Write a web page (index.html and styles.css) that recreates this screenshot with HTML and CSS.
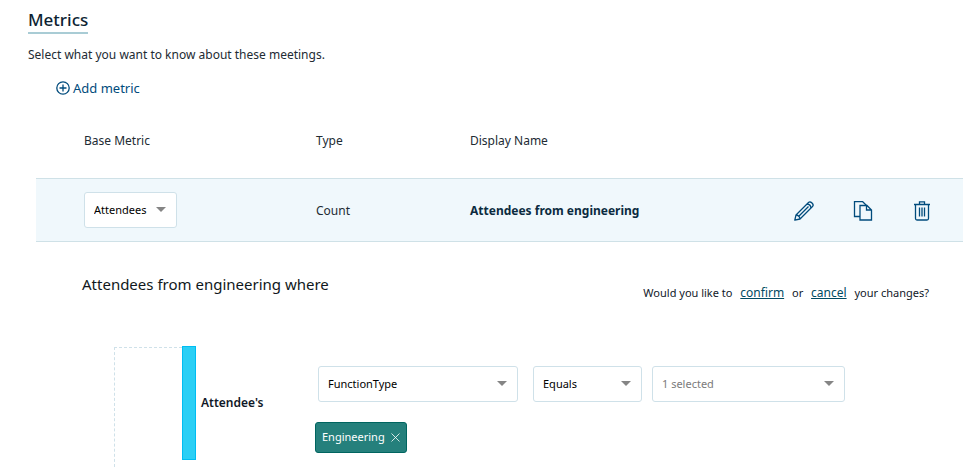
FILE: index.html
```html
<!DOCTYPE html>
<html lang="en">
<head>
  <meta charset="UTF-8" />
  <meta name="viewport" content="width=device-width, initial-scale=1.0"/>
  <title>Metrics</title>
  <link rel="stylesheet" href="styles.css">
</head>
<body>
  <main class="metrics">
    <h1>Metrics</h1>
    <p class="intro">Select what you want to know about these meetings.</p>
    <button type="button" class="add-metric">
      <svg width="14" height="14" viewBox="0 0 14 14" fill="none" stroke="currentColor" stroke-width="1.3" aria-hidden="true">
        <circle cx="7" cy="7" r="6.2"/><path d="M7 3.5v7M3.5 7h7"/>
      </svg>
      Add metric
    </button>

    <table class="metric-table">
      <thead>
        <tr>
          <th class="col-base">Base Metric</th>
          <th class="col-type">Type</th>
          <th class="col-name">Display Name</th>
          <th class="col-actions"></th>
        </tr>
      </thead>
      <tbody>
        <tr>
          <td class="col-base">
            <select class="dropdown base" aria-label="Base Metric"><option>Attendees</option></select>
          </td>
          <td class="text">Count</td>
          <td class="text name">Attendees from engineering</td>
          <td class="text">
            <div class="actions">
              <button type="button" aria-label="Edit">
                <svg width="20" height="20" viewBox="0 0 20 20" fill="none" stroke="currentColor" stroke-width="1.3" stroke-linejoin="round" aria-hidden="true">
                  <path d="M.8 19.2L2 14 14.5 1.5c2-2 6 2 4 4L6 18z"/>
                  <path d="M2 14c2 0 4 2 4 4M13 3c2 .2 3.8 2 4 4M4.800 15.200L14.500 5.500"/>
                </svg>
              </button>
              <button type="button" aria-label="Copy">
                <svg width="20" height="20" viewBox="0 0 20 20" fill="none" stroke="currentColor" stroke-width="1.3" aria-hidden="true">
                  <path d="M7 15.500H1.500v-15h8l4 4"/>
                  <path d="M7 4.500h7l4.500 4.500v10H7zM13.500 4.500v4.500h5"/>
                </svg>
              </button>
              <button type="button" aria-label="Delete">
                <svg width="20" height="20" viewBox="0 0 20 20" fill="none" stroke="currentColor" stroke-width="1.3" aria-hidden="true">
                  <path d="M2 3.500h16M7.500 3V.800h5V3M3.500 3.500v14q0 1.500 1.500 1.500h10q1.500 0 1.500-1.500v-14M7.500 6.500v9M10 6.500v9M12.500 6.500v9"/>
                </svg>
              </button>
            </div>
          </td>
        </tr>
      </tbody>
    </table>

    <section class="filter">
      <div class="filter-head">
        <h2>Attendees from engineering where</h2>
        <p>Would you like to <a href="#confirm">confirm</a> or <a href="#cancel">cancel</a> your changes?</p>
      </div>
      <div class="filter-body">
        <div class="branch"></div>
        <div class="bar"></div>
        <span class="subject">Attendee's</span>
        <div class="conditions">
          <div class="condition-row">
            <select class="dropdown attribute" aria-label="Attribute"><option>FunctionType</option></select>
            <select class="dropdown operator" aria-label="Operator"><option>Equals</option></select>
            <select class="dropdown values" aria-label="Values"><option>1 selected</option></select>
          </div>
          <button type="button" class="tag" aria-label="Remove Engineering">
            Engineering
            <svg width="9" height="9" viewBox="0 0 9 9" stroke="currentColor" stroke-opacity=".8" aria-hidden="true"><path d="M.5.5l8 8M8.5.5l-8 8"/></svg>
          </button>
        </div>
      </div>
    </section>
  </main>
</body>
</html>
```

FILE: styles.css
```css
* { box-sizing: border-box; }
body { margin: 0; background: #fff; color: #222b33; font-family: "Noto Sans", "Segoe UI", sans-serif; font-size: 12px; line-height: 18px; }
h1, h2, p { margin: 0; font-weight: normal; }
button, select { font: inherit; }
button { border: none; background: none; padding: 0; color: inherit; cursor: pointer; }

.metrics { padding: 8px 15px 0 28px; }
h1 { width: fit-content; color: #0d1f33; font-size: 17px; font-weight: 500; line-height: 24px; border-bottom: 2px solid #a9ccd5; }
.intro { margin-top: 12px; }
.add-metric { display: flex; align-items: center; gap: 3px; margin: 15px 0 0 28px; color: #004b7c; font-size: 13px; }

/* metric list */
.metric-table { width: calc(100% - 8px); margin: 24px 0 0 8px; border-collapse: collapse; table-layout: fixed; }
.metric-table th, .metric-table td { padding: 0; text-align: left; font-weight: normal; }
.metric-table th { height: 57px; padding-top: 11px; vertical-align: top; }
.metric-table .col-base { width: 280px; padding-left: 48px; }
.metric-table .col-type { width: 154px; }
.metric-table .col-actions { width: 169px; }
.metric-table td { height: 63px; background: #f0f8fc; border: solid #cfe1e7; border-width: 1px 0; }
.metric-table .text { padding-top: 3px; }
.metric-table .name { color: #0b2b40; font-weight: bold; }
.actions { display: flex; gap: 39px; color: #004b7c; }
.actions svg { display: block; }

.dropdown {
  appearance: none; height: 36px; padding: 1px 9px 0; border: 1px solid #cfe1e9; border-radius: 3px; color: #000; font-size: 11px;
  background: #fff url("data:image/svg+xml,%3Csvg xmlns='http://www.w3.org/2000/svg' width='10' height='5'%3E%3Cpath d='M0 0h10L5 5z' fill='%23858585'/%3E%3C/svg%3E") no-repeat right 10px center;
}
.base { display: block; width: 93px; }
.attribute { width: 200px; }
.operator { width: 109px; }
.values { width: 193px; color: #7b7b7b; }

/* filter editor */
.filter-head { display: flex; justify-content: space-between; padding: 30px 34px 0 54px; }
.filter-head h2 { color: #101820; font-size: 15px; line-height: 24px; }
.filter-head p { margin-top: 12px; color: #101828; font-size: 11px; }
.filter-head a { margin: 0 5px; color: #004b63; font-size: 12px; }
.filter-body { display: flex; margin: 44px 0 0 86px; height: 121px; }
.branch { width: 68px; margin-top: 1px; border: dashed #cfe1e9; border-width: 1px 0 0 1px; }
.bar { width: 14px; height: 114px; background: #2bcff5; border: 1px solid #00bdf2; }
.subject { width: 119px; height: 114px; padding-left: 5px; line-height: 114px; color: #101828; font-weight: 600; }
.conditions { padding-top: 20px; }
.condition-row { display: flex; gap: 10px; margin-left: 3px; }
.condition-row .attribute { margin-right: 5px; }
.tag { display: flex; align-items: center; gap: 6px; height: 31px; margin-top: 20px; padding: 0 6px; background: #25807c; border: 1px solid #006560; border-radius: 3px; color: #fff; font-size: 11px; }
```
